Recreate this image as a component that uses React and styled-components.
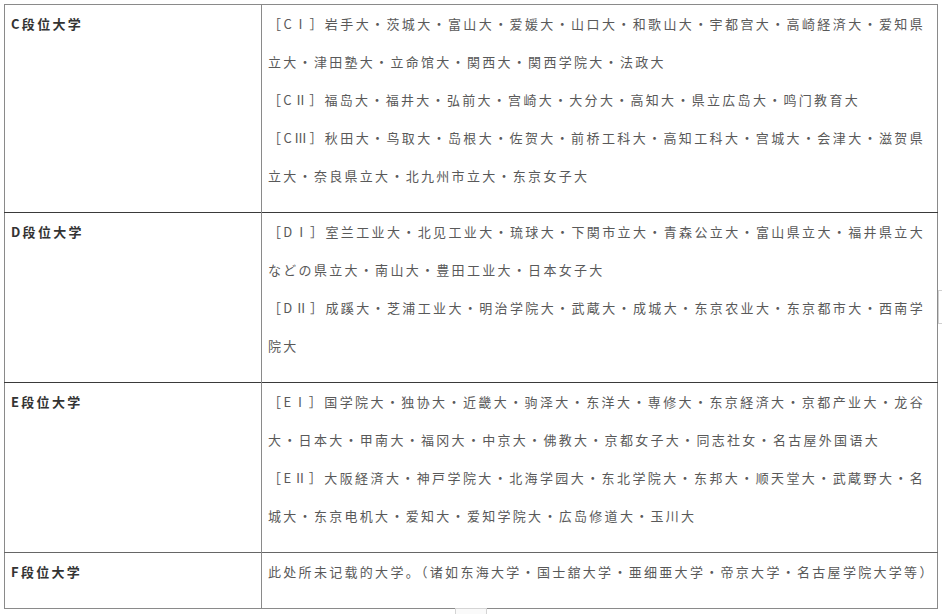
import React from 'react';
import styled, { createGlobalStyle } from 'styled-components';

const GlobalStyle = createGlobalStyle`
    html, body {
        margin: 0;
        padding: 0;
        background: #ffffff;
    }
    body {
        font-family: "Noto Sans CJK SC", "Noto Sans CJK JP", "Noto Sans", sans-serif;
    }
`;

const Page = styled.div`
    position: relative;
    width: 942px;
    height: 614px;
    padding: 4px 0 0 4px;
    box-sizing: border-box;
    overflow: hidden;
`;

const Table = styled.table`
    width: 934px;
    table-layout: fixed;
    border-collapse: collapse;
    border: 1px solid #8a8a8a;
`;

const Row = styled.tr`
    border-top: 1px solid ${(p) => p.$edge || '#8a8a8a'};
`;

const Label = styled.td`
    width: 244px;
    vertical-align: top;
    padding: 0 6px 17px 6px;
    border-right: 1px solid #8a8a8a;
    font-size: 13px;
    line-height: 38px;
    font-weight: 700;
    letter-spacing: 2.3px;
    color: #333333;
    white-space: nowrap;
`;

const Content = styled.td`
    vertical-align: top;
    padding: 0 12px 17px 6px;
    font-size: 13px;
    line-height: 38px;
    letter-spacing: 2.3px;
    color: #595959;
    text-align: justify;
    white-space: ${(p) => (p.$single ? 'nowrap' : 'normal')};
`;

const Line = styled.p`
    margin: 0;
`;

const Tab = styled.div`
    position: absolute;
    left: 455px;
    bottom: -4px;
    width: 30px;
    height: 8px;
    border: 1px solid #d4d4d4;
    background: #fafafa;
`;

const SideMark = styled.div`
    position: absolute;
    right: 0;
    top: 290px;
    width: 3px;
    height: 32px;
    border-top: 1px solid #d0d0d0;
    border-bottom: 1px solid #d0d0d0;
    border-left: 1px solid #d0d0d0;
`;

const rows = [
    {
        label: 'C段位大学',
        lines: [
            '［CⅠ］岩手大・茨城大・富山大・爱媛大・山口大・和歌山大・宇都宫大・高崎経済大・爱知県立大・津田塾大・立命馆大・関西大・関西学院大・法政大',
            '［CⅡ］福岛大・福井大・弘前大・宫崎大・大分大・高知大・県立広岛大・鸣门教育大',
            '［CⅢ］秋田大・鸟取大・岛根大・佐贺大・前桥工科大・高知工科大・宫城大・会津大・滋贺県立大・奈良県立大・北九州市立大・东京女子大',
        ],
    },
    {
        label: 'D段位大学',
        edge: '#3a3a3a',
        lines: [
            '［DⅠ］室兰工业大・北见工业大・琉球大・下関市立大・青森公立大・富山県立大・福井県立大などの県立大・南山大・豊田工业大・日本女子大',
            '［DⅡ］成蹊大・芝浦工业大・明治学院大・武蔵大・成城大・东京农业大・东京都市大・西南学院大',
        ],
    },
    {
        label: 'E段位大学',
        edge: '#3a3a3a',
        lines: [
            '［EⅠ］国学院大・独协大・近畿大・驹泽大・东洋大・専修大・东京経済大・京都产业大・龙谷大・日本大・甲南大・福冈大・中京大・佛教大・京都女子大・同志社女・名古屋外国语大',
            '［EⅡ］大阪経済大・神戸学院大・北海学园大・东北学院大・东邦大・顺天堂大・武蔵野大・名城大・东京电机大・爱知大・爱知学院大・広岛修道大・玉川大',
        ],
    },
    {
        label: 'F段位大学',
        edge: '#666666',
        single: true,
        lines: [
            '此处所未记载的大学。（诸如东海大学・国士舘大学・亜细亜大学・帝京大学・名古屋学院大学等）',
        ],
    },
];

export default function App() {
    return (
        <>
            <GlobalStyle />
            <Page>
                <Table>
                    <tbody>
                        {rows.map((row) => (
                            <Row key={row.label} $edge={row.edge}>
                                <Label>{row.label}</Label>
                                <Content $single={row.single}>
                                    {row.lines.map((line) => (
                                        <Line key={line}>{line}</Line>
                                    ))}
                                </Content>
                            </Row>
                        ))}
                    </tbody>
                </Table>
                <SideMark />
                <Tab />
            </Page>
        </>
    );
}
